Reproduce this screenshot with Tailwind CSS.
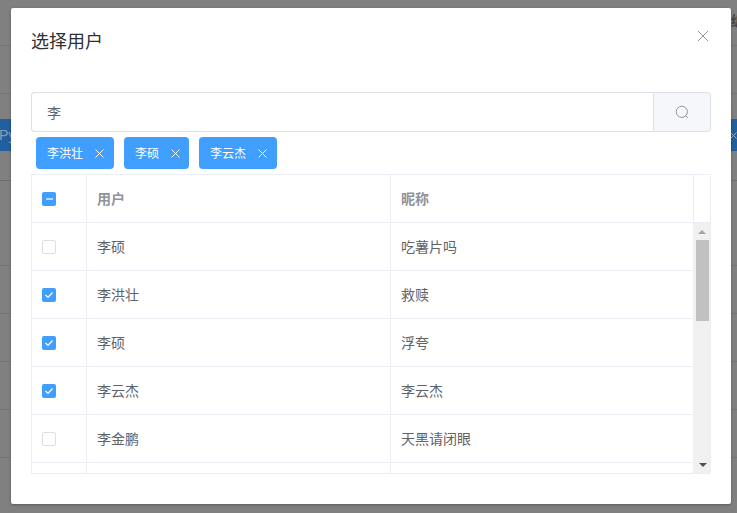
<!DOCTYPE html>
<html lang="zh">
<head>
    <meta charset="UTF-8">
    <meta name="viewport" content="width=device-width, initial-scale=1.0">
    <script src="https://cdn.jsdelivr.net/npm/@tailwindcss/browser@4"></script>
    <title>选择用户</title>
</head>
<body class="font-['Liberation_Sans','Noto_Sans_CJK_SC',sans-serif]">
<div class="relative w-[737px] h-[513px] overflow-hidden bg-[#808080]">

    <!-- page behind the overlay -->
    <div class="h-[46px] border-b border-[#737373] flex justify-end items-center overflow-hidden">
        <span class="-mr-[8px] -mt-[4px] text-sm font-bold text-[#454545]">编</span>
    </div>
    <div class="h-[48px] border-b border-[#737373]"></div>
    <div class="mt-[25px] h-[32px] bg-[#215f9e] flex justify-between items-center text-[#8d9db0] text-sm">
        <span class="-ml-[1px]">Py</span>
        <svg class="w-[7px] h-[7px] text-[#8fa8c4]" viewBox="0 0 7 7" fill="none" stroke="currentColor"><path d="M.5.5l6 6M6.5.5l-6 6"/></svg>
    </div>
    <div class="h-[30px] border-b border-[#6e6e6e]"></div>
    <div class="h-[85px] border-b border-[#737373]"></div>
    <div class="h-[48px] border-b border-[#737373]"></div>
    <div class="h-[48px] border-b border-[#737373]"></div>
    <div class="h-[48px] border-b border-[#737373]"></div>
    <div class="h-[48px] border-b border-[#737373]"></div>

    <!-- dialog -->
    <div class="absolute left-[11px] top-[8px] w-[720px] h-[496px] bg-white rounded-[2px] px-5 shadow-[0_1px_3px_rgba(0,0,0,0.3)]">
        <div class="relative h-[84px] pt-[22px]">
            <h2 class="text-[18px] leading-6 text-[#303133]">选择用户</h2>
            <svg class="absolute right-[2px] top-[22px] w-3 h-3 text-[#909399]" viewBox="0 0 12 12" fill="none" stroke="currentColor" stroke-width="1">
                <path d="M1 1l10 10M11 1L1 11"/>
            </svg>
        </div>

        <div class="flex h-10 text-sm">
            <div class="flex-1 border border-[#dcdfe6] border-r-0 rounded-l-[4px] pl-[15px] leading-[40px] text-[#606266]">李</div>
            <div class="w-[58px] border border-[#dcdfe6] rounded-r-[4px] bg-[#f5f7fa] flex items-center justify-center">
                <svg class="w-[14px] h-[14px] text-[#909399]" viewBox="0 0 14 14" fill="none" stroke="currentColor" stroke-width="1">
                    <circle cx="6.8" cy="6.8" r="5.6"/>
                    <path d="M10.8 10.8l2 2"/>
                </svg>
            </div>
        </div>

        <div class="flex gap-[10px] pl-[5px] mt-[5px] h-8 text-xs text-white">
            <span class="flex items-center w-[78px] pl-[11px] bg-[#409eff] rounded-[4px]"><span class="pt-[2px]">李洪壮</span><svg class="w-[9px] h-[9px] ml-[12px]" viewBox="0 0 9 9" fill="none" stroke="currentColor"><path d="M.5.5l8 8M8.5.5l-8 8"/></svg></span>
            <span class="flex items-center w-[65px] pl-[11px] bg-[#409eff] rounded-[4px]"><span class="pt-[2px]">李硕</span><svg class="w-[9px] h-[9px] ml-[12px]" viewBox="0 0 9 9" fill="none" stroke="currentColor"><path d="M.5.5l8 8M8.5.5l-8 8"/></svg></span>
            <span class="flex items-center w-[78px] pl-[11px] bg-[#409eff] rounded-[4px]"><span class="pt-[2px]">李云杰</span><svg class="w-[9px] h-[9px] ml-[12px]" viewBox="0 0 9 9" fill="none" stroke="currentColor"><path d="M.5.5l8 8M8.5.5l-8 8"/></svg></span>
        </div>

        <div class="relative mt-[5px] h-[300px] border border-[#ebeef5] overflow-hidden text-sm text-[#606266]">
            <div class="flex h-[48px] border-b border-[#ebeef5] font-bold text-[#909399]">
                <div class="w-[55px] shrink-0 border-r border-[#ebeef5] flex items-center pl-[10px]">
                    <span class="w-[14px] h-[14px] rounded-[2px] bg-[#409eff] flex items-center justify-center"><span class="w-[7px] h-[2px] bg-white/60"></span></span>
                </div>
                <div class="w-[304px] shrink-0 border-r border-[#ebeef5] flex items-center pl-[10px]">用户</div>
                <div class="w-[303px] shrink-0 border-r border-[#ebeef5] flex items-center pl-[10px]">昵称</div>
            </div>

            <div class="flex h-[48px] border-b border-[#ebeef5]">
                <div class="w-[55px] shrink-0 border-r border-[#ebeef5] flex items-center pl-[10px]"><span class="w-[14px] h-[14px] rounded-[2px] border border-[#dcdfe6] bg-white"></span></div>
                <div class="w-[304px] shrink-0 border-r border-[#ebeef5] flex items-center pl-[10px]">李硕</div>
                <div class="w-[303px] shrink-0 border-r border-[#ebeef5] flex items-center pl-[10px]">吃薯片吗</div>
            </div>
            <div class="flex h-[48px] border-b border-[#ebeef5]">
                <div class="w-[55px] shrink-0 border-r border-[#ebeef5] flex items-center pl-[10px]"><span class="w-[14px] h-[14px] rounded-[2px] bg-[#409eff] flex items-center justify-center"><svg class="w-[10px] h-[10px] text-white" viewBox="0 0 10 10" fill="none" stroke="currentColor" stroke-width="1.2"><path d="M1.5 5l2.5 2.5 4.5-5"/></svg></span></div>
                <div class="w-[304px] shrink-0 border-r border-[#ebeef5] flex items-center pl-[10px]">李洪壮</div>
                <div class="w-[303px] shrink-0 border-r border-[#ebeef5] flex items-center pl-[10px]">救赎</div>
            </div>
            <div class="flex h-[48px] border-b border-[#ebeef5]">
                <div class="w-[55px] shrink-0 border-r border-[#ebeef5] flex items-center pl-[10px]"><span class="w-[14px] h-[14px] rounded-[2px] bg-[#409eff] flex items-center justify-center"><svg class="w-[10px] h-[10px] text-white" viewBox="0 0 10 10" fill="none" stroke="currentColor" stroke-width="1.2"><path d="M1.5 5l2.5 2.5 4.5-5"/></svg></span></div>
                <div class="w-[304px] shrink-0 border-r border-[#ebeef5] flex items-center pl-[10px]">李硕</div>
                <div class="w-[303px] shrink-0 border-r border-[#ebeef5] flex items-center pl-[10px]">浮夸</div>
            </div>
            <div class="flex h-[48px] border-b border-[#ebeef5]">
                <div class="w-[55px] shrink-0 border-r border-[#ebeef5] flex items-center pl-[10px]"><span class="w-[14px] h-[14px] rounded-[2px] bg-[#409eff] flex items-center justify-center"><svg class="w-[10px] h-[10px] text-white" viewBox="0 0 10 10" fill="none" stroke="currentColor" stroke-width="1.2"><path d="M1.5 5l2.5 2.5 4.5-5"/></svg></span></div>
                <div class="w-[304px] shrink-0 border-r border-[#ebeef5] flex items-center pl-[10px]">李云杰</div>
                <div class="w-[303px] shrink-0 border-r border-[#ebeef5] flex items-center pl-[10px]">李云杰</div>
            </div>
            <div class="flex h-[48px] border-b border-[#ebeef5]">
                <div class="w-[55px] shrink-0 border-r border-[#ebeef5] flex items-center pl-[10px]"><span class="w-[14px] h-[14px] rounded-[2px] border border-[#dcdfe6] bg-white"></span></div>
                <div class="w-[304px] shrink-0 border-r border-[#ebeef5] flex items-center pl-[10px]">李金鹏</div>
                <div class="w-[303px] shrink-0 border-r border-[#ebeef5] flex items-center pl-[10px]">天黑请闭眼</div>
            </div>
            <div class="flex h-[10px]">
                <div class="w-[55px] shrink-0 border-r border-[#ebeef5]"></div>
                <div class="w-[304px] shrink-0 border-r border-[#ebeef5]"></div>
                <div class="w-[303px] shrink-0 border-r border-[#ebeef5]"></div>
            </div>

            <!-- scrollbar -->
            <div class="absolute right-0 top-[48px] bottom-0 w-[17px] bg-[#f0f0f0]">
                <div class="ml-[5px] pt-[7px]"><div class="w-0 h-0 border-x-[4px] border-x-transparent border-b-[4px] border-b-[#a3a3a3]"></div></div>
                <div class="mt-[6px] ml-[3px] w-[13px] h-[81px] bg-[#c1c1c1]"></div>
                <div class="absolute left-[6px] bottom-[6px] w-0 h-0 border-x-[4px] border-x-transparent border-t-[4px] border-t-[#505050]"></div>
            </div>
        </div>
    </div>
</div>
</body>
</html>
